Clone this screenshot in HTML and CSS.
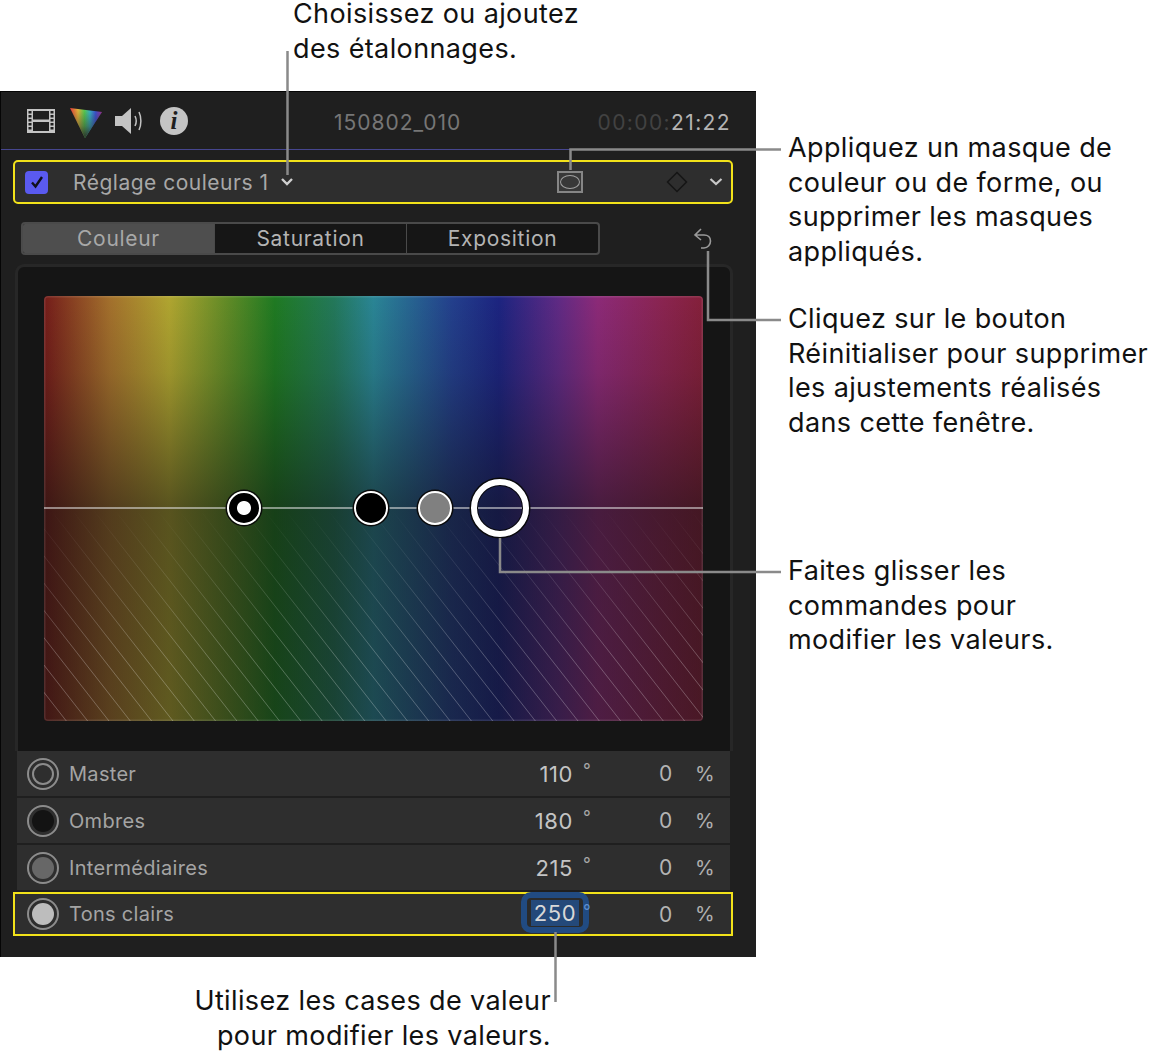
FILE: index.html
```html
<!DOCTYPE html>
<html lang="fr">
  <head>
    <title>Masque de couleur</title>
    <link rel="stylesheet" href="styles.css">
  </head>

  <body>
    <div class="page">
      <div class="panel">
        <div class="top-bar">
          <div class="tools">
            <svg class="film" width="30" height="26" viewBox="0 0 30 26">
              <rect x="1" y="1" width="28" height="24" fill="#c4c4c4"/>
              <rect x="7" y="3" width="16" height="8.500" fill="#1f1f1f"/>
              <rect x="7" y="14" width="16" height="9" fill="#1f1f1f"/>
              <g fill="#1f1f1f">
                <rect x="2.500" y="3" width="3" height="2.500"/>
                <rect x="2.500" y="7" width="3" height="2.500"/>
                <rect x="2.500" y="11" width="3" height="2.500"/>
                <rect x="2.500" y="15" width="3" height="2.500"/>
                <rect x="2.500" y="19" width="3" height="2.500"/>
                <rect x="24.500" y="3" width="3" height="2.500"/>
                <rect x="24.500" y="7" width="3" height="2.500"/>
                <rect x="24.500" y="11" width="3" height="2.500"/>
                <rect x="24.500" y="15" width="3" height="2.500"/>
                <rect x="24.500" y="19" width="3" height="2.500"/>
              </g>
            </svg>
            <svg class="hue" width="34" height="32" viewBox="0 0 34 32">
              <defs>
                <linearGradient id="hueA" x1="0" y1="0" x2="1" y2="0">
                  <stop offset="0" stop-color="#e8383a"/>
                  <stop offset="0.250" stop-color="#e8b83a"/>
                  <stop offset="0.450" stop-color="#58d050"/>
                  <stop offset="0.620" stop-color="#38b8c8"/>
                  <stop offset="0.800" stop-color="#3d52d8"/>
                  <stop offset="1" stop-color="#a0308e"/>
                </linearGradient>
                <linearGradient id="hueB" x1="0" y1="0" x2="0" y2="1">
                  <stop offset="0" stop-color="#2a2a2a" stop-opacity="0"/>
                  <stop offset="0.600" stop-color="#2a2a2a" stop-opacity="0.450"/>
                  <stop offset="1" stop-color="#2a2a2a" stop-opacity="0.950"/>
                </linearGradient>
              </defs>
              <polygon points="1,1 33,5 16,31" fill="url(#hueA)"/>
              <polygon points="1,1 33,5 16,31" fill="url(#hueB)"/>
            </svg>
            <svg class="speaker" width="30" height="28" viewBox="0 0 30 28">
              <path d="M1 9h7l9-8v26l-9-8H1z" fill="#c4c4c4"/>
              <path d="M21 9c1.500 3 1.500 7 0 10M25 5c2.500 5 2.500 13 0 18" fill="none" stroke="#c4c4c4" stroke-width="1.500"/>
            </svg>
            <span class="info">i</span>
          </div>
          <span class="clip-name">150802_010</span>
          <span class="timecode"><span class="timecode-dim">00:00:</span>21:22</span>
        </div>

        <div class="effect-row">
          <span class="checkbox">
            <svg width="16" height="16" viewBox="0 0 16 16">
              <path d="M3 8.500l3.500 4L13 3" fill="none" stroke="#10101c" stroke-width="2.400"/>
            </svg>
          </span>
          <span class="effect-name">Réglage couleurs 1</span>
          <svg class="chevron" width="14" height="10" viewBox="0 0 14 10">
            <path d="M2 2l5 5 5-5" fill="none" stroke="#d0d0d0" stroke-width="2.400"/>
          </svg>
          <span class="mask-btn"><span class="mask-oval"></span></span>
          <svg class="keyframe" width="22" height="22" viewBox="0 0 22 22">
            <path d="M11 1.500L20.500 11 11 20.500 1.500 11z" fill="none" stroke="#151515" stroke-width="1.500"/>
          </svg>
          <svg class="chevron-end" width="14" height="10" viewBox="0 0 14 10">
            <path d="M1.500 2l5.500 5 5.500-5" fill="none" stroke="#c8c8c8" stroke-width="2.200"/>
          </svg>
        </div>

        <div class="tab-row">
          <div class="tabs">
            <span class="tab tab-active">Couleur</span>
            <span class="tab">Saturation</span>
            <span class="tab">Exposition</span>
          </div>
          <svg class="reset" width="22" height="24" viewBox="0 0 22 24">
            <path d="M9 2L3 8l6 5M3 8h9c4 0 6.500 2.500 6.500 6s-2.500 7-6.500 7H9" fill="none" stroke="#9a9a9a" stroke-width="1.600"/>
          </svg>
        </div>

        <div class="board">
          <div class="board-color">
            <div class="board-fade"></div>
            <div class="board-hatch"></div>
            <div class="board-line"></div>
            <span class="puck puck-master"></span>
            <span class="puck puck-shadows"></span>
            <span class="puck puck-mids"></span>
            <span class="puck-active"></span>
          </div>
        </div>

        <div class="rows">
          <div class="row">
            <span class="swatch swatch-master"></span>
            <span class="row-label">Master</span>
            <span class="row-hue">110</span><span class="row-deg">°</span>
            <span class="row-sat">0</span><span class="row-pct">%</span>
          </div>
          <div class="row">
            <span class="swatch swatch-shadows"></span>
            <span class="row-label">Ombres</span>
            <span class="row-hue">180</span><span class="row-deg">°</span>
            <span class="row-sat">0</span><span class="row-pct">%</span>
          </div>
          <div class="row">
            <span class="swatch swatch-mids"></span>
            <span class="row-label">Intermédiaires</span>
            <span class="row-hue">215</span><span class="row-deg">°</span>
            <span class="row-sat">0</span><span class="row-pct">%</span>
          </div>
          <div class="row row-selected">
            <span class="swatch swatch-lights"></span>
            <span class="row-label">Tons clairs</span>
            <span class="row-hue row-hue-focus"><span class="row-hue-text">250</span></span><span class="row-deg row-deg-focus">°</span>
            <span class="row-sat">0</span><span class="row-pct">%</span>
          </div>
        </div>
      </div>

      <svg class="leaders" width="1157" height="1056" viewBox="0 0 1157 1056">
        <path d="M287.500 51V175"/>
        <path d="M570.500 170V149.500H781"/>
        <path d="M708 251V320H781"/>
        <path d="M500 538V572H781"/>
        <path d="M555.500 932V1002"/>
      </svg>

      <p class="note note-top"><span class="note-line">Choisissez ou ajoutez</span><span class="note-line">des étalonnages.</span></p>
      <p class="note note-mask">Appliquez un masque de<br>couleur ou de forme, ou<br>supprimer les masques<br>appliqués.</p>
      <p class="note note-reset">Cliquez sur le bouton<br>Réinitialiser pour supprimer<br>les ajustements réalisés<br>dans cette fenêtre.</p>
      <p class="note note-drag">Faites glisser les<br>commandes pour<br>modifier les valeurs.</p>
      <p class="note note-value">Utilisez les cases de valeur<br>pour modifier les valeurs.</p>
    </div>
  </body>
</html>
```

FILE: styles.css
```css
body {
  margin: 0;
  background: #fff;
}
.page {
  position: relative;
  width: 1157px;
  height: 1056px;
  overflow: hidden;
  padding-top: 91px;
  box-sizing: border-box;
}

/* panel */
.panel {
  width: 756px;
  height: 866px;
  box-sizing: border-box;
  background: #1f1f1f;
  border-top: 1px solid #050505;
  border-left: 1px solid #050505;
  font-family: Inter, "Liberation Sans", sans-serif;
  color: #a8a8a8;
}
.top-bar {
  height: 58px;
  box-sizing: border-box;
  display: flex;
  align-items: center;
  border-bottom: 1px solid #46468f;
  position: relative;
}
.tools {
  display: flex;
  align-items: center;
  padding-left: 25px;
  padding-top: 1px;
  width: 190px;
  flex: none;
}
.film {
  margin-right: 13px;
}
.hue {
  margin-right: 11px;
  margin-top: 3px;
}
.speaker {
  margin-right: 16px;
  margin-top: -1px;
}
.info {
  width: 28px;
  height: 28px;
  border-radius: 50%;
  background: #c4c4c4;
  color: #1f1f1f;
  font-family: "Liberation Serif", serif;
  font-style: italic;
  font-weight: bold;
  font-size: 25px;
  line-height: 28px;
  text-align: center;
}
.clip-name {
  margin-left: 118px;
  margin-top: 3px;
  font-size: 21px;
  letter-spacing: 1px;
  color: #767676;
}
.timecode {
  margin-left: auto;
  margin-right: 25px;
  margin-top: 3px;
  font-size: 21px;
  letter-spacing: 1.4px;
  color: #b4b4b4;
}
.timecode-dim {
  color: #424242;
}

.effect-row {
  margin: 10px 0 0 12px;
  width: 720px;
  height: 44px;
  box-sizing: border-box;
  border: 2px solid #f2e21a;
  border-radius: 5px;
  background: #2e2e2e;
  display: flex;
  align-items: center;
  padding-left: 10px;
}
.checkbox {
  width: 23px;
  height: 23px;
  border-radius: 4px;
  background: #5a5af0;
  display: flex;
  align-items: center;
  justify-content: center;
}
.effect-name {
  margin-left: 25px;
  font-size: 21px;
  letter-spacing: 0.5px;
  color: #a8a8a8;
}
.chevron {
  margin-left: 12px;
}
.mask-btn {
  margin-left: 263px;
  width: 26px;
  height: 22px;
  box-sizing: border-box;
  border: 2px solid #868686;
  background: #383838;
  display: flex;
  align-items: center;
  justify-content: center;
}
.mask-oval {
  width: 20px;
  height: 14px;
  box-sizing: border-box;
  border: 1.5px solid #a0a0a0;
  border-radius: 50%;
}
.keyframe {
  margin-left: 83px;
}
.chevron-end {
  margin-left: 21px;
}

.tab-row {
  margin: 17px 0 0 20px;
  display: flex;
  align-items: center;
  height: 34px;
}
.tabs {
  width: 579px;
  height: 33px;
  box-sizing: border-box;
  border: 2px solid #4a4a4a;
  border-radius: 4px;
  background: #161616;
  display: flex;
  overflow: hidden;
}
.tab {
  flex: 1;
  text-align: center;
  font-size: 21px;
  letter-spacing: 0.7px;
  line-height: 29px;
  color: #b4b4b4;
  border-left: 1px solid #4a4a4a;
}
.tab-active {
  border-left: 0;
  background: #4e4e4e;
  color: #a8a8a8;
}
.reset {
  margin-left: 92px;
  margin-top: 2px;
}

.board {
  margin: 9px 0 0 14px;
  width: 718px;
  height: 487px;
  box-sizing: border-box;
  background: #151515;
  border: 3px solid #272727;
  border-bottom: 0;
  border-radius: 9px 9px 0 0;
  padding: 29px 0 0 26px;
}
.board-color {
  position: relative;
  width: 659px;
  height: 425px;
  border-radius: 4px;
  overflow: hidden;
  background: linear-gradient(to right, #741c1a 0%, #a3702c 10%, #b0a530 19%, #5f8a26 28%, #1f7a22 35%, #23785a 44%, #2a8595 50%, #233f8c 62%, #1c2480 69%, #5f2a84 78%, #8c2a78 84%, #8a2450 94%, #84203a 100%);
}
.board-color::after {
  content: "";
  position: absolute;
  inset: 0;
  border-radius: 4px;
  box-shadow: inset 0 0 0 1.5px rgba(255, 255, 255, 0.1);
}
.board-fade {
  position: absolute;
  inset: 0;
  background: linear-gradient(to bottom, rgba(16, 16, 16, 0) 0%, rgba(16, 16, 16, 0.12) 18%, rgba(16, 16, 16, 0.55) 50%, rgba(16, 16, 16, 0.5) 100%);
}
.board-hatch {
  position: absolute;
  left: 0;
  right: 0;
  top: 212px;
  bottom: 0;
  background: repeating-linear-gradient(52deg, rgba(255, 255, 255, 0) 0, rgba(255, 255, 255, 0.26) 0.8px, rgba(255, 255, 255, 0) 1.6px, rgba(255, 255, 255, 0) 16.8px);
  -webkit-mask-image: linear-gradient(to bottom, transparent 0%, #000 70%);
  mask-image: linear-gradient(to bottom, transparent 0%, #000 70%);
}
.board-line {
  position: absolute;
  left: 0;
  right: 0;
  top: 211px;
  height: 2px;
  background: rgba(225, 225, 225, 0.55);
}
.puck {
  position: absolute;
  top: 195px;
  width: 34px;
  height: 34px;
  box-sizing: border-box;
  border-radius: 50%;
  border: 2px solid #fff;
  box-shadow: 0 0 0 1.5px #0a0a0a;
  background: #000;
}
.puck-master {
  left: 183px;
  background: radial-gradient(circle, #fff 0, #fff 6.5px, #000 7.5px);
}
.puck-shadows {
  left: 310px;
}
.puck-mids {
  left: 374px;
  background: #808080;
}
.puck-active {
  position: absolute;
  left: 427px;
  top: 183px;
  width: 58px;
  height: 58px;
  box-sizing: border-box;
  border-radius: 50%;
  border: 6px solid #fff;
  box-shadow: 0 0 0 1.5px #0a0a0a, inset 0 0 0 1px #0a0a0a;
}

.rows {
  margin-left: 16px;
  width: 713px;
  display: flex;
  flex-direction: column;
}
.row {
  height: 45px;
  margin-bottom: 2px;
  background: #2e2e2e;
  display: flex;
  align-items: center;
  position: relative;
  font-size: 20px;
  letter-spacing: 0.3px;
}
.row-selected {
  margin: 0 0 0 -4px;
  width: 720px;
  height: 44px;
  box-sizing: border-box;
  border: 2px solid #f2e21a;
  padding-left: 2px;
}
.swatch {
  margin-left: 10px;
  width: 32px;
  height: 32px;
  box-sizing: border-box;
  border-radius: 50%;
  border: 2px solid #8c8c8c;
  padding: 3px;
  background-clip: content-box;
  flex: none;
}
.swatch-master {
  background: none;
  position: relative;
}
.swatch-master::after {
  content: "";
  display: block;
  width: 100%;
  height: 100%;
  box-sizing: border-box;
  border: 2px solid #8c8c8c;
  border-radius: 50%;
}
.swatch-shadows {
  background-color: #131313;
}
.swatch-mids {
  background-color: #676767;
}
.swatch-lights {
  background-color: #bdbdbd;
}
.row-label {
  margin-left: 10px;
  color: #a4a4a4;
}
.row-hue {
  position: absolute;
  right: 157px;
  color: #c4c4c4;
  font-size: 22px;
  letter-spacing: 0.6px;
}
.row-deg {
  position: absolute;
  left: 566px;
  top: 9px;
  font-size: 17px;
  color: #a8a8a8;
}
.row-sat {
  position: absolute;
  left: 642px;
  color: #b4b4b4;
  font-size: 21px;
}
.row-pct {
  position: absolute;
  left: 678px;
  color: #b0b0b0;
  font-size: 20px;
}
.row-selected .row-hue {
  right: 142px;
  top: -2px;
  width: 68px;
  height: 41px;
  box-sizing: border-box;
  border: 6px solid #214b82;
  border-radius: 10px;
  background: #2b2b2b;
  text-align: center;
  line-height: 31px;
}
.row-hue-text {
  background: #24497a;
  padding: 0 3px;
  color: #d8d8d8;
}
.row-selected .row-deg {
  left: 568px;
  top: 7px;
  color: #5f8fd0;
}
.row-selected .row-sat {
  left: 644px;
}
.row-selected .row-pct {
  left: 680px;
}

/* callouts over the panel */
.leaders {
  position: absolute;
  left: 0;
  top: 0;
}
.leaders path {
  fill: none;
  stroke: #8a8a8a;
  stroke-width: 2.500;
}
.note {
  position: absolute;
  margin: 0;
  font-family: Inter, "Liberation Sans", sans-serif;
  font-size: 27px;
  letter-spacing: 0.38px;
  line-height: 34.6px;
  color: #111;
  white-space: nowrap;
}
.note-top {
  left: 293px;
  top: 0;
  line-height: 28.6px;
}
.note-line {
  display: block;
}
.note-line + .note-line {
  margin-top: 6px;
}
.note-mask {
  left: 788px;
  top: 131px;
}
.note-reset {
  left: 788px;
  top: 302px;
}
.note-drag {
  left: 788px;
  top: 554px;
}
.note-value {
  right: 606px;
  top: 984px;
  text-align: right;
}
```
